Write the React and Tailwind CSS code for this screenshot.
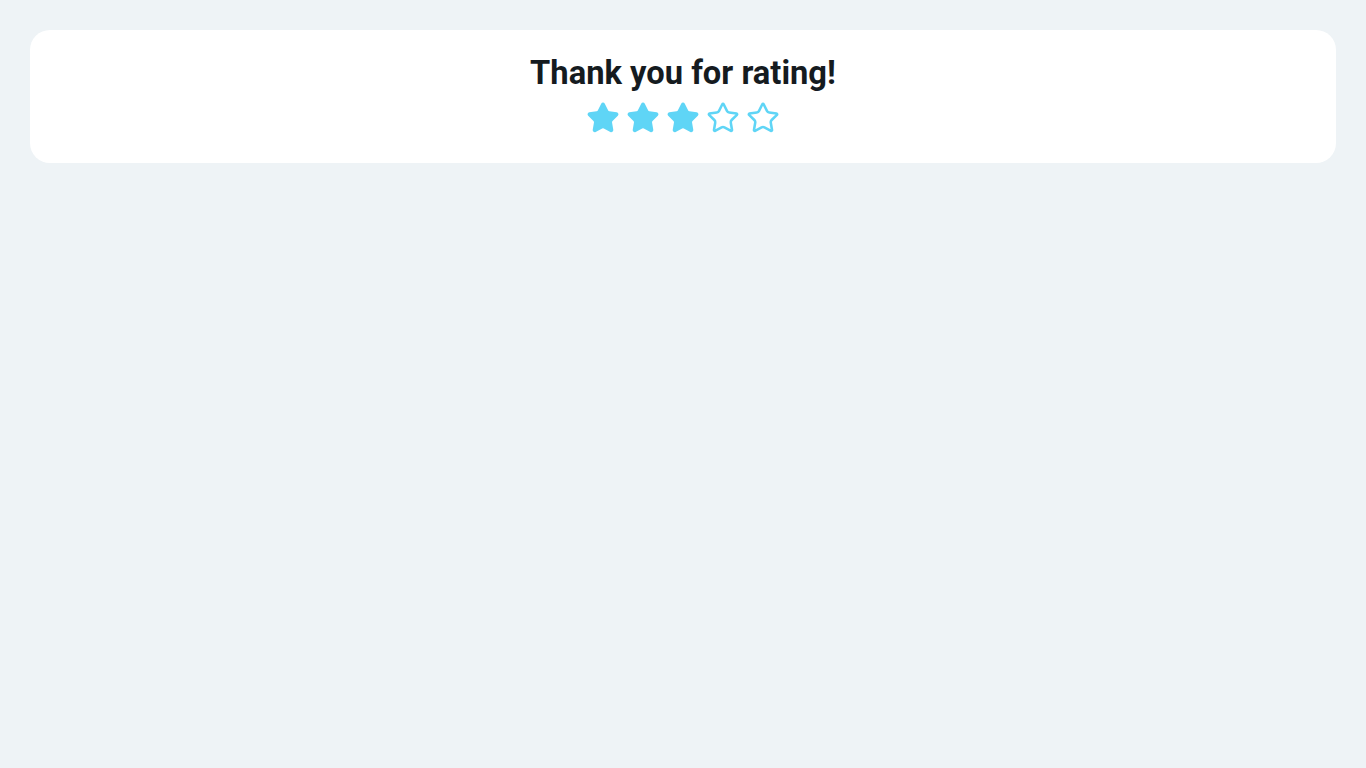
import { Star } from 'lucide-react';

const RATING = 3;

const App = () => {
  return (
    <div className="min-h-screen bg-[#eef3f6] p-[30px]" style={{ fontFamily: 'Roboto, "Noto Sans", sans-serif' }}>
      <div className="bg-white rounded-[20px] pt-[23px] pb-[28px] flex flex-col items-center">
        <h1 className="text-[32.7px] leading-[40px] font-bold text-[#151b1f]">Thank you for rating!</h1>
        <div className="flex gap-1.5 mt-2">
          {[1, 2, 3, 4, 5].map(n => (
            <Star
              key={n}
              size={34}
              strokeWidth={1.8}
              color="#5fd5f6"
              fill={n <= RATING ? '#5fd5f6' : 'none'}
            />
          ))}
        </div>
      </div>
    </div>
  );
};

export default App;
